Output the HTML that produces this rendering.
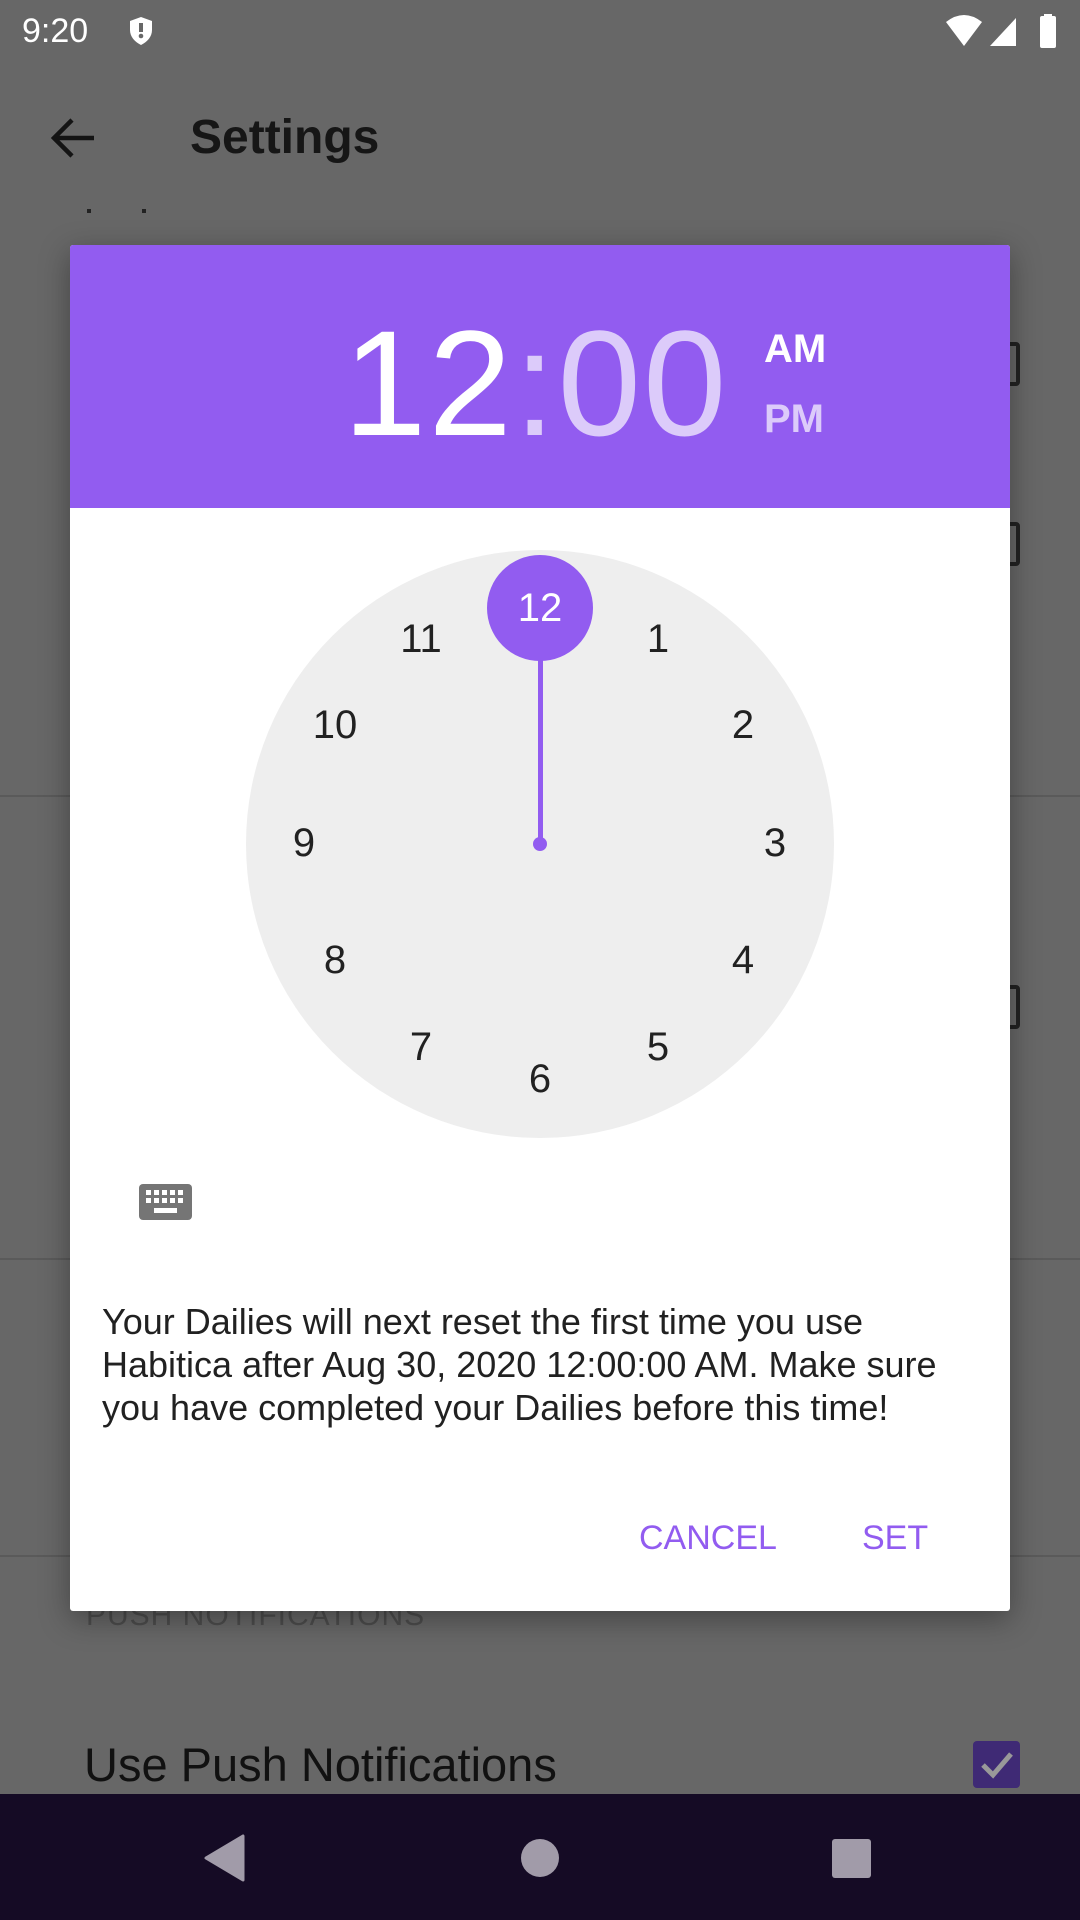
<!DOCTYPE html>
<html><head><meta charset="utf-8"><style>
*{margin:0;padding:0;box-sizing:border-box}
body{width:1080px;height:1920px;background:#676767;position:relative;overflow:hidden;font-family:"Liberation Sans",sans-serif}
.a{position:absolute}
.n{position:absolute;width:80px;margin-left:-40px;text-align:center;font-size:40px;line-height:40px;margin-top:-20px;color:#212121}
</style></head><body>
<div class="a" style="left:22px;top:12px;font-size:34px;color:#fff">9:20</div>
<svg class="a" style="left:128px;top:16px" width="26" height="30" viewBox="0 0 26 30"><path d="M13 1 L24 5 V14 C24 21 19 26 13 29 C7 26 2 21 2 14 V5 Z" fill="#fff"/><rect x="11" y="7" width="4" height="9" fill="#676767"/><circle cx="13" cy="20" r="2.3" fill="#676767"/></svg>
<svg class="a" style="left:944px;top:14px" width="116" height="36" viewBox="0 0 116 36"><path d="M2 8 Q20 -6 38 8 L20 32 Z" fill="#fff"/><path d="M46 32 L72 4 V32 Z" fill="#fff"/><rect x="96" y="2" width="16" height="32" rx="2" fill="#fff"/><rect x="100" y="0" width="8" height="4" fill="#fff"/></svg>
<svg class="a" style="left:50px;top:116px" width="48" height="44" viewBox="0 0 48 44"><path d="M44 22 H6 M22 4 L4 22 L22 40" stroke="#141414" stroke-width="4.5" fill="none"/></svg>
<div class="a" style="left:190px;top:110px;font-size:48px;font-weight:bold;color:#161616">Settings</div>
<div class="a" style="left:87px;top:209px;width:4px;height:4px;background:#222"></div>
<div class="a" style="left:142px;top:209px;width:4px;height:4px;background:#222"></div>
<div class="a" style="left:0;top:795px;width:1080px;height:2px;background:#5a5a5a"></div>
<div class="a" style="left:0;top:1258px;width:1080px;height:2px;background:#5a5a5a"></div>
<div class="a" style="left:0;top:1555px;width:1080px;height:2px;background:#5a5a5a"></div>
<div class="a" style="left:990px;top:342px;width:30px;height:44px;border:4px solid #222;border-radius:4px"></div>
<div class="a" style="left:990px;top:522px;width:30px;height:44px;border:4px solid #222;border-radius:4px"></div>
<div class="a" style="left:990px;top:985px;width:30px;height:44px;border:4px solid #222;border-radius:4px"></div>
<div class="a" style="left:86px;top:1599px;font-size:30px;color:#4d4d4d;letter-spacing:1px">PUSH NOTIFICATIONS</div>
<div class="a" style="left:84px;top:1737px;font-size:47px;color:#111">Use Push Notifications</div>
<div class="a" style="left:973px;top:1741px;width:47px;height:47px;background:#3f2a75;border-radius:4px"></div>
<svg class="a" style="left:973px;top:1741px" width="47" height="47"><path d="M10 24 L20 34 L38 13" stroke="#999" stroke-width="5" fill="none"/></svg>

<div class="a" style="left:70px;top:245px;width:940px;height:1366px;background:#fff;border-radius:3px;box-shadow:0 8px 30px rgba(0,0,0,.35);overflow:hidden">
 <div class="a" style="left:0;top:0;width:940px;height:263px;background:#925cf0"></div>
 <div class="a" style="left:273px;top:63px;font-size:150px;line-height:150px;color:#fff;letter-spacing:2px;white-space:nowrap">12<span style="color:#dccbfa">:00</span></div>
 <div class="a" style="left:694px;top:82px;font-size:40px;font-weight:bold;color:#fff">AM</div>
 <div class="a" style="left:694px;top:152px;font-size:40px;font-weight:bold;color:#dccbfa">PM</div>
</div>
<div class="a" style="left:246px;top:550px;width:588px;height:588px;border-radius:50%;background:#eeeeee"></div>
<div class="a" style="left:537.5px;top:607px;width:5px;height:237px;background:#925cf0"></div>
<div class="a" style="left:533px;top:837px;width:14px;height:14px;border-radius:50%;background:#925cf0"></div>
<div class="a" style="left:487px;top:555px;width:106px;height:106px;border-radius:50%;background:#925cf0"></div>
<div class="n" style="left:540px;top:608px;color:#fff">12</div>
<div class="n" style="left:658px;top:639px">1</div>
<div class="n" style="left:743px;top:725px">2</div>
<div class="n" style="left:775px;top:843px">3</div>
<div class="n" style="left:743px;top:960px">4</div>
<div class="n" style="left:658px;top:1047px">5</div>
<div class="n" style="left:540px;top:1079px">6</div>
<div class="n" style="left:421px;top:1047px">7</div>
<div class="n" style="left:335px;top:960px">8</div>
<div class="n" style="left:304px;top:843px">9</div>
<div class="n" style="left:335px;top:725px">10</div>
<div class="n" style="left:421px;top:639px">11</div>
<svg class="a" style="left:139px;top:1184px" width="53" height="36" viewBox="0 0 53 36"><rect width="53" height="36" rx="4" fill="#757575"/><g fill="#fff"><rect x="7" y="6" width="5" height="5"/><rect x="15" y="6" width="5" height="5"/><rect x="23" y="6" width="5" height="5"/><rect x="31" y="6" width="5" height="5"/><rect x="39" y="6" width="5" height="5"/><rect x="7" y="14" width="5" height="5"/><rect x="15" y="14" width="5" height="5"/><rect x="23" y="14" width="5" height="5"/><rect x="31" y="14" width="5" height="5"/><rect x="39" y="14" width="5" height="5"/><rect x="15" y="24" width="23" height="5"/></g></svg>
<div class="a" style="left:102px;top:1300px;width:900px;font-size:36px;line-height:43px;color:#212121;white-space:nowrap">Your Dailies will next reset the first time you use<br>Habitica after Aug 30, 2020 12:00:00 AM. Make sure<br>you have completed your Dailies before this time!</div>
<div class="a" style="left:639px;top:1519px;font-size:34px;color:#925cf0">CANCEL</div>
<div class="a" style="left:862px;top:1519px;font-size:34px;color:#925cf0">SET</div>

<div class="a" style="left:0;top:1794px;width:1080px;height:126px;background:#150b25"></div>
<svg class="a" style="left:0;top:1794px" width="1080" height="126"><path d="M243 42 V86 L206 64 Z" fill="#a19ba9" stroke="#a19ba9" stroke-width="3" stroke-linejoin="round"/><circle cx="540" cy="64" r="19" fill="#a19ba9"/><rect x="832" y="45" width="39" height="39" rx="3" fill="#a19ba9"/></svg>
</body></html>
